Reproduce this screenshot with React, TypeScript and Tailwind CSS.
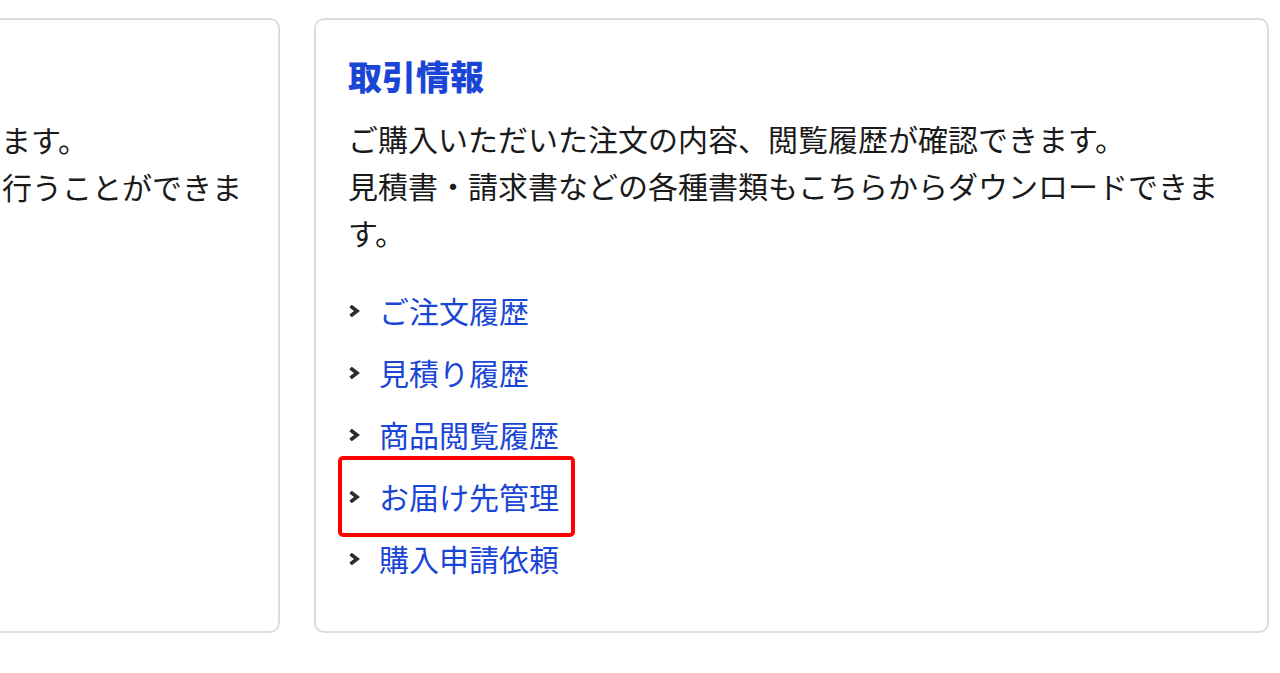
import React from 'react';

const font = { fontFamily: '"Noto Sans CJK JP", "Noto Sans", sans-serif' };

interface LinkItem {
    label: string;
    highlighted?: boolean;
}

const links: LinkItem[] = [
    { label: 'ご注文履歴' },
    { label: '見積り履歴' },
    { label: '商品閲覧履歴' },
    { label: 'お届け先管理', highlighted: true },
    { label: '購入申請依頼' },
];

const Chevron = () => (
    <svg width="12" height="12" viewBox="0 0 12 12" className="shrink-0">
        <polyline points="2.5,1 9,6 2.5,11" fill="none" stroke="#2b2b2b" strokeWidth="3.6" strokeLinejoin="miter" />
    </svg>
);

export default function App() {
    return (
        <div className="w-full h-[673px] overflow-hidden bg-white text-[#1a1a1a]" style={font}>
            <div className="flex gap-[34px] ml-[-664px] pt-[18px]">
                {/* left card, mostly out of view */}
                <section className="w-[944px] h-[615px] shrink-0 rounded-[10px] border-2 border-[#dddddd] pt-[32px] px-[34px]">
                    <h2 className="text-[34px] leading-[50px] font-bold text-[#1a46d6]">会員情報</h2>
                    <p className="mt-[14px] text-[30px] leading-[47px]">
                        ご登録されている会員情報の確認・変更ができます。<br />
                        パスワード変更やメールマガジンの配信設定も行うことができま<br />
                        す。
                    </p>
                </section>

                <section className="w-[955px] h-[615px] shrink-0 rounded-[10px] border-2 border-[#dddddd] pt-[31px] px-[32px]">
                    <h2 className="text-[34px] leading-[50px] font-black text-[#1a46d6]">取引情報</h2>
                    <p className="mt-[14px] text-[30px] leading-[47px]">
                        ご購入いただいた注文の内容、閲覧履歴が確認できます。<br />
                        見積書・請求書などの各種書類もこちらからダウンロードできま<br />
                        す。
                    </p>
                    <ul className="mt-[31px] flex flex-col gap-[15px]">
                        {links.map(link => (
                            <li key={link.label} className="relative flex items-center gap-[19px] w-fit">
                                <Chevron />
                                <a href="#" className="text-[30px] leading-[47px] text-[#1a46d6]">{link.label}</a>
                                {link.highlighted && (
                                    <span className="absolute -top-[17px] -bottom-[17px] -left-[10px] -right-[16px] border-4 border-[#ff0000] rounded-[5px] pointer-events-none"></span>
                                )}
                            </li>
                        ))}
                    </ul>
                </section>
            </div>
        </div>
    );
}
